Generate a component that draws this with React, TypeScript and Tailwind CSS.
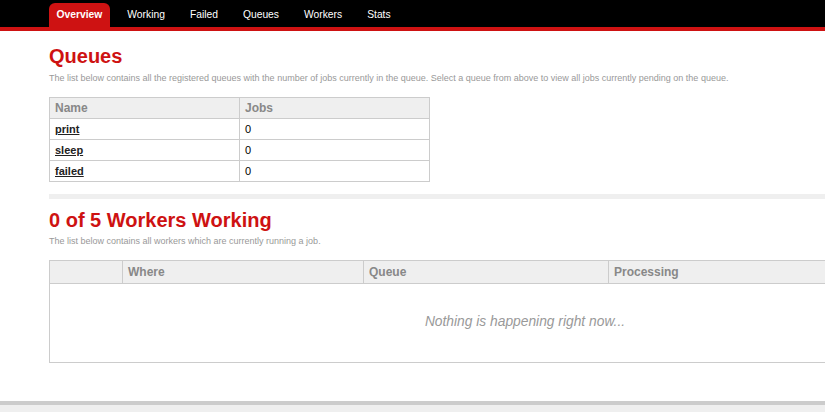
import React from 'react';

const tabs = ['Overview', 'Working', 'Failed', 'Queues', 'Workers', 'Stats'];

const queues = [
    { name: 'print', jobs: 0 },
    { name: 'sleep', jobs: 0 },
    { name: 'failed', jobs: 0 },
];

const App: React.FC = () => {
    return (
        <div
            className="min-h-[412px] w-full overflow-hidden bg-white flex flex-col"
            style={{ fontFamily: '"Liberation Sans", Arial, sans-serif' }}
        >
            {/* Header */}
            <div className="bg-black border-b-4 border-[#ce1212] h-[31px] pl-[49px] flex items-end">
                <ul className="flex items-end">
                    {tabs.map((tab, i) => (
                        <li key={tab}>
                            <a
                                href="#"
                                className={`h-[24px] px-[7.5px] mr-[10px] flex items-center text-[10.3px] text-white no-underline rounded-t-[6px] ${i === 0 ? 'bg-[#ce1212] font-bold' : ''
                                    }`}
                            >
                                {tab}
                            </a>
                        </li>
                    ))}
                </ul>
            </div>

            {/* Main */}
            <div className="flex-1 pl-[49px]">
                <div className="w-[952px]">
                    <h1 className="text-[20px] font-bold text-[#ce1212] leading-none mt-[15px]">Queues</h1>
                    <p className="text-[9px] text-[#999] mt-[7px] leading-tight">
                        The list below contains all the registered queues with the number of jobs currently in the queue. Select a queue from above to view all jobs currently pending on the queue.
                    </p>

                    <table className="w-[381px] mt-[13px] border-collapse">
                        <thead>
                            <tr>
                                <th className="border border-[#ccc] bg-[#efefef] text-[#888] text-[12px] font-bold text-left px-[5px] h-[21px] w-[190px]">
                                    Name
                                </th>
                                <th className="border border-[#ccc] bg-[#efefef] text-[#888] text-[12px] font-bold text-left px-[5px] h-[21px]">
                                    Jobs
                                </th>
                            </tr>
                        </thead>
                        <tbody>
                            {queues.map((q) => (
                                <tr key={q.name}>
                                    <td className="border border-[#ccc] px-[5px] h-[21px] text-[11px]">
                                        <a href="#" className="font-bold underline text-[#222]">
                                            {q.name}
                                        </a>
                                    </td>
                                    <td className="border border-[#ccc] px-[5px] h-[21px] text-[11px] text-black">{q.jobs}</td>
                                </tr>
                            ))}
                        </tbody>
                    </table>

                    <hr className="border-0 border-t-[5px] border-[#efefef] mt-[12px]" />

                    <h1 className="text-[20px] font-bold text-[#ce1212] leading-none mt-[11px]">0 of 5 Workers Working</h1>
                    <p className="text-[9px] text-[#999] mt-[6px] leading-tight">
                        The list below contains all workers which are currently running a job.
                    </p>

                    <table className="w-[952px] mt-[12px] border-collapse">
                        <thead>
                            <tr>
                                <th className="border border-[#ccc] bg-[#efefef] h-[23px] w-[73px]"></th>
                                <th className="border border-[#ccc] bg-[#efefef] text-[#888] text-[12px] font-bold text-left px-[5px] h-[23px] w-[241px]">
                                    Where
                                </th>
                                <th className="border border-[#ccc] bg-[#efefef] text-[#888] text-[12px] font-bold text-left px-[5px] h-[23px] w-[245px]">
                                    Queue
                                </th>
                                <th className="border border-[#ccc] bg-[#efefef] text-[#888] text-[12px] font-bold text-left px-[5px] h-[23px]">
                                    Processing
                                </th>
                            </tr>
                        </thead>
                        <tbody>
                            <tr>
                                <td
                                    colSpan={4}
                                    className="border border-[#ccc] h-[79px] text-center italic text-[13.8px] text-[#999]"
                                >
                                    Nothing is happening right now...
                                </td>
                            </tr>
                        </tbody>
                    </table>
                </div>
            </div>

            {/* Footer */}
            <div className="mt-[38px] h-[12px] bg-[#efefef] border-t-4 border-[#ccc]" />
        </div>
    );
};

export default App;
